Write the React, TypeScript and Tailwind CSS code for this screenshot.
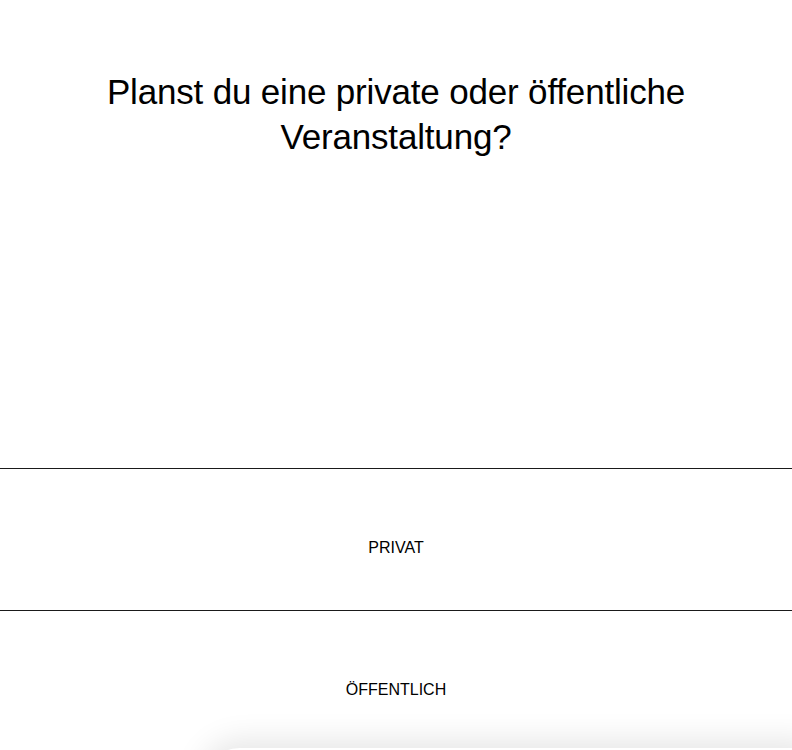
export default function App() {
  const options = ["PRIVAT", "ÖFFENTLICH"];

  return (
    <div
      className="relative min-h-screen overflow-hidden bg-white text-black"
      style={{ fontFamily: '"Liberation Sans", Arial, sans-serif' }}
    >
      <div className="flex h-[468px] flex-col px-6 pt-[69px]">
        <h1 className="mx-auto max-w-[640px] text-center text-[35px] leading-[45px] tracking-[-0.005em]">
          Planst du eine private oder öffentliche Veranstaltung?
        </h1>
      </div>

      <div className="flex flex-col">
        {options.map((label) => (
          <button
            key={label}
            type="button"
            className="flex h-[142px] w-full items-center justify-center border-t border-[#1a1a1a] pt-[17px] text-[16px]"
          >
            {label}
          </button>
        ))}
      </div>

      <div className="pointer-events-none absolute bottom-[-36px] left-[200px] right-[-20px] h-10 rounded-tl-[40px] bg-white shadow-[0_-8px_30px_rgba(0,0,0,0.1)]" />
    </div>
  );
}
